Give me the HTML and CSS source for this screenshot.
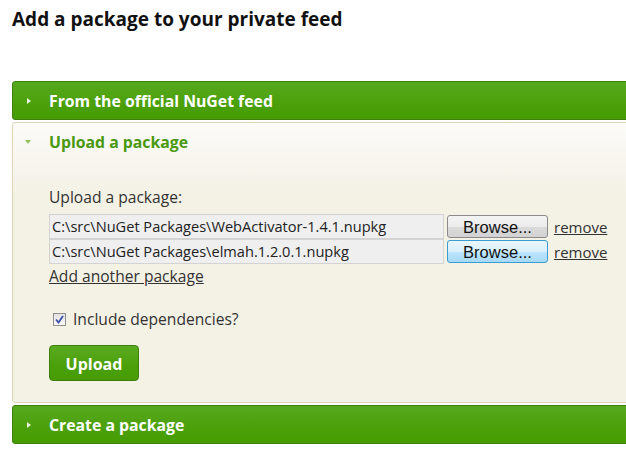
FILE: index.html
```html
<!DOCTYPE html>
<html>
<head>
<meta charset="utf-8">
<link rel="stylesheet" href="styles.css">
</head>
<body>
<h1 class="title">Add a package to your private feed</h1>
<div class="accordion">
  <div class="bar">
    <span class="tri-right"></span>
    <span class="bar-text">From the official NuGet feed</span>
  </div>
  <div class="panel">
    <div class="panel-head">
      <span class="tri-down"></span>
      <span class="panel-title">Upload a package</span>
    </div>
    <div class="panel-body">
      <div class="label">Upload a package:</div>
      <div class="file-row">
        <div class="file-input">C:\src\NuGet Packages\WebActivator-1.4.1.nupkg</div>
        <button class="browse">Browse...</button>
        <a class="remove">remove</a>
      </div>
      <div class="file-row">
        <div class="file-input">C:\src\NuGet Packages\elmah.1.2.0.1.nupkg</div>
        <button class="browse focused">Browse...</button>
        <a class="remove">remove</a>
      </div>
      <a class="add-link">Add another package</a>
      <label class="check-row">
        <span class="checkbox"><svg width="9" height="9" viewBox="0 0 9 9"><path d="M1 4.5 L3.5 7.5 L8 1" fill="none" stroke="#3b4fa8" stroke-width="1.8"/></svg></span>
        <span>Include dependencies?</span>
      </label>
      <button class="upload">Upload</button>
    </div>
  </div>
  <div class="bar">
    <span class="tri-right"></span>
    <span class="bar-text">Create a package</span>
  </div>
</div>
</body>
</html>
```
FILE: styles.css
```css
html, body {
  margin: 0;
  padding: 0;
  background: #fff;
  overflow: hidden;
}
body {
  width: 626px;
  height: 454px;
  font-family: "Open Sans", "Noto Sans", sans-serif;
}
.title {
  margin: 0;
  padding: 6px 0 0 12px;
  font-size: 19px;
  font-weight: 700;
  color: #111;
  line-height: 26px;
}
.accordion {
  margin: 49px 0 0 12px;
  width: 640px;
  display: flex;
  flex-direction: column;
  gap: 2px;
}
.bar {
  box-sizing: border-box;
  height: 39px;
  border: 1px solid #3c7f0c;
  border-radius: 3px;
  background: linear-gradient(#57a81e, #4ba00a 60%, #469c02);
  display: flex;
  align-items: center;
  padding-left: 14px;
}
.tri-right {
  width: 0;
  height: 0;
  border-top: 3px solid transparent;
  border-bottom: 3px solid transparent;
  border-left: 4px solid #e8f3dc;
  margin-right: 18px;
}
.bar-text {
  color: #fff;
  font-weight: 700;
  font-size: 15.8px;
}
.panel {
  box-sizing: border-box;
  height: 281px;
  border: 1px solid #ddd5b8;
  border-radius: 3px;
  background: linear-gradient(#fbfbf9, #f4f1e5 70px, #f4f1e5);
}
.panel-head {
  display: flex;
  align-items: center;
  height: 38px;
  padding-left: 12px;
}
.tri-down {
  width: 0;
  height: 0;
  border-left: 3px solid transparent;
  border-right: 3px solid transparent;
  border-top: 4px solid #8fc35e;
  margin-right: 18px;
}
.panel-title {
  color: #4a9910;
  font-weight: 700;
  font-size: 15.8px;
}
.panel-body {
  padding: 25px 0 0 36px;
  display: flex;
  flex-direction: column;
  align-items: flex-start;
  color: #333;
  font-size: 15.6px;
}
.label {
  line-height: 22px;
  margin-bottom: 6px;
}
.file-row {
  display: flex;
  align-items: center;
  height: 25px;
}
.file-input {
  box-sizing: border-box;
  width: 395px;
  height: 25px;
  border: 1px solid #d3d3d3;
  background: #efefef;
  font-size: 14.6px;
  line-height: 23px;
  padding-left: 2px;
  color: #222;
  white-space: nowrap;
  overflow: hidden;
}
.browse {
  box-sizing: border-box;
  margin-left: 3px;
  width: 101px;
  height: 23px;
  border: 1px solid #8a8a8a;
  border-radius: 3px;
  background: linear-gradient(#f3f3f3, #ececec 50%, #dbdbdb 51%, #d2d2d2);
  font-family: "Liberation Sans", Arial, sans-serif;
  font-size: 16.5px;
  line-height: 20px;
  color: #111;
  padding: 0;
}
.browse.focused {
  border-color: #3c9cd2;
  background: linear-gradient(#eaf6fd, #d9f0fc 50%, #bee6fd 51%, #a7d9f5);
}
.remove {
  margin-left: 6px;
  color: #333;
  text-decoration: underline;
  font-size: 15px;
}
.add-link {
  color: #333;
  text-decoration: underline;
  line-height: 22px;
  margin-top: 1px;
}
.check-row {
  display: flex;
  align-items: center;
  margin-top: 22px;
  margin-left: 4px;
  line-height: 20px;
}
.checkbox {
  box-sizing: border-box;
  width: 13px;
  height: 13px;
  border: 1px solid #8f8f8f;
  background: linear-gradient(#e3e3e3, #f8f8f8);
  display: flex;
  align-items: center;
  justify-content: center;
  margin-right: 7px;
}
.upload {
  margin-top: 16px;
  box-sizing: border-box;
  width: 90px;
  height: 36px;
  border: 1px solid #3c7f0c;
  border-radius: 4px;
  background: linear-gradient(#5aaa21, #4ba00a 60%, #469c02);
  color: #fff;
  font-family: "Open Sans", sans-serif;
  font-weight: 700;
  font-size: 16px;
  line-height: 22px;
  padding: 2px 0 0;
}
```
